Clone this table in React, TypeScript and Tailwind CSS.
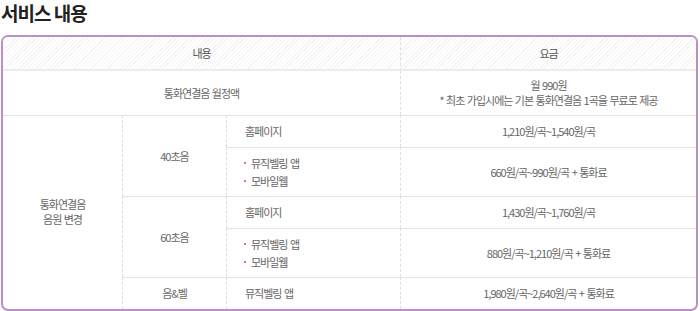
import clsx from "clsx";

const font = { fontFamily: '"Noto Sans CJK KR", "Noto Sans", sans-serif' };

const line = "border-t border-t-[#e3e3e3]";
const dash = "border-l border-l-[#dedede] [border-left-style:dashed]";
const hatch =
  "bg-[repeating-linear-gradient(135deg,#f4f4f4_0px,#f4f4f4_1px,#ffffff_1px,#ffffff_3px)]";

const Bullets = ({ items }: { items: string[] }) => (
  <div className="flex flex-col gap-[3px]">
    {items.map((t) => (
      <div key={t} className="flex items-center">
        <span className="w-[2px] h-[2px] rounded-full bg-[#e8318f] mr-[5px]" />
        <span>{t}</span>
      </div>
    ))}
  </div>
);

const App = () => {
  return (
    <div
      className="w-[700px] h-[311px] bg-white text-[#666] text-[11px] leading-[15px] tracking-[-1px] [word-spacing:1px]"
      style={font}
    >
      <h1 className="h-[35px] pl-px pt-[1px] text-[19px] leading-[24px] font-bold text-[#222] [word-spacing:0px]">
        서비스 내용
      </h1>
      <div className="ml-px w-[697px] border-2 border-[#ba8ec9] rounded-[7px] overflow-hidden">
        <div className="grid grid-cols-[119px_104px_174px_1fr] grid-rows-[34px_44px_32px_49px_32px_49px_32px]">
          {/* header */}
          <div className={clsx("col-span-3 flex items-center justify-center border-b-2 border-b-[#ececec] text-[#555]", hatch)}>
            내용
          </div>
          <div className={clsx("flex items-center justify-center border-b-2 border-b-[#ececec] text-[#555]", dash, hatch)}>
            요금
          </div>

          {/* monthly fee */}
          <div className="col-span-3 flex items-center justify-center">통화연결음 월정액</div>
          <div className={clsx("flex flex-col items-center justify-center", dash)}>
            <span>월 990원</span>
            <span>* 최초 가입시에는 기본 통화연결음 1곡을 무료로 제공</span>
          </div>

          {/* sound change */}
          <div className={clsx("row-span-5 flex flex-col items-center justify-center pb-[1px]", line)}>
            <span>통화연결음</span>
            <span>음원 변경</span>
          </div>

          <div className={clsx("row-span-2 flex items-center justify-center", line, dash)}>40초음</div>
          <div className={clsx("flex items-center pl-[18px]", line, dash)}>홈페이지</div>
          <div className={clsx("flex items-center justify-center", line, dash)}>1,210원/곡~1,540원/곡</div>
          <div className={clsx("flex items-center pl-[17px]", line, dash)}>
            <Bullets items={["뮤직벨링 앱", "모바일웹"]} />
          </div>
          <div className={clsx("flex items-center justify-center", line, dash)}>660원/곡~990원/곡 + 통화료</div>

          <div className={clsx("row-span-2 flex items-center justify-center", line, dash)}>60초음</div>
          <div className={clsx("flex items-center pl-[18px]", line, dash)}>홈페이지</div>
          <div className={clsx("flex items-center justify-center", line, dash)}>1,430원/곡~1,760원/곡</div>
          <div className={clsx("flex items-center pl-[17px]", line, dash)}>
            <Bullets items={["뮤직벨링 앱", "모바일웹"]} />
          </div>
          <div className={clsx("flex items-center justify-center", line, dash)}>880원/곡~1,210원/곡 + 통화료</div>

          <div className={clsx("flex items-center justify-center", line, dash)}>음&amp;벨</div>
          <div className={clsx("flex items-center pl-[18px]", line, dash)}>뮤직벨링 앱</div>
          <div className={clsx("flex items-center justify-center", line, dash)}>1,980원/곡~2,640원/곡 + 통화료</div>
        </div>
      </div>
    </div>
  );
};

export default App;
